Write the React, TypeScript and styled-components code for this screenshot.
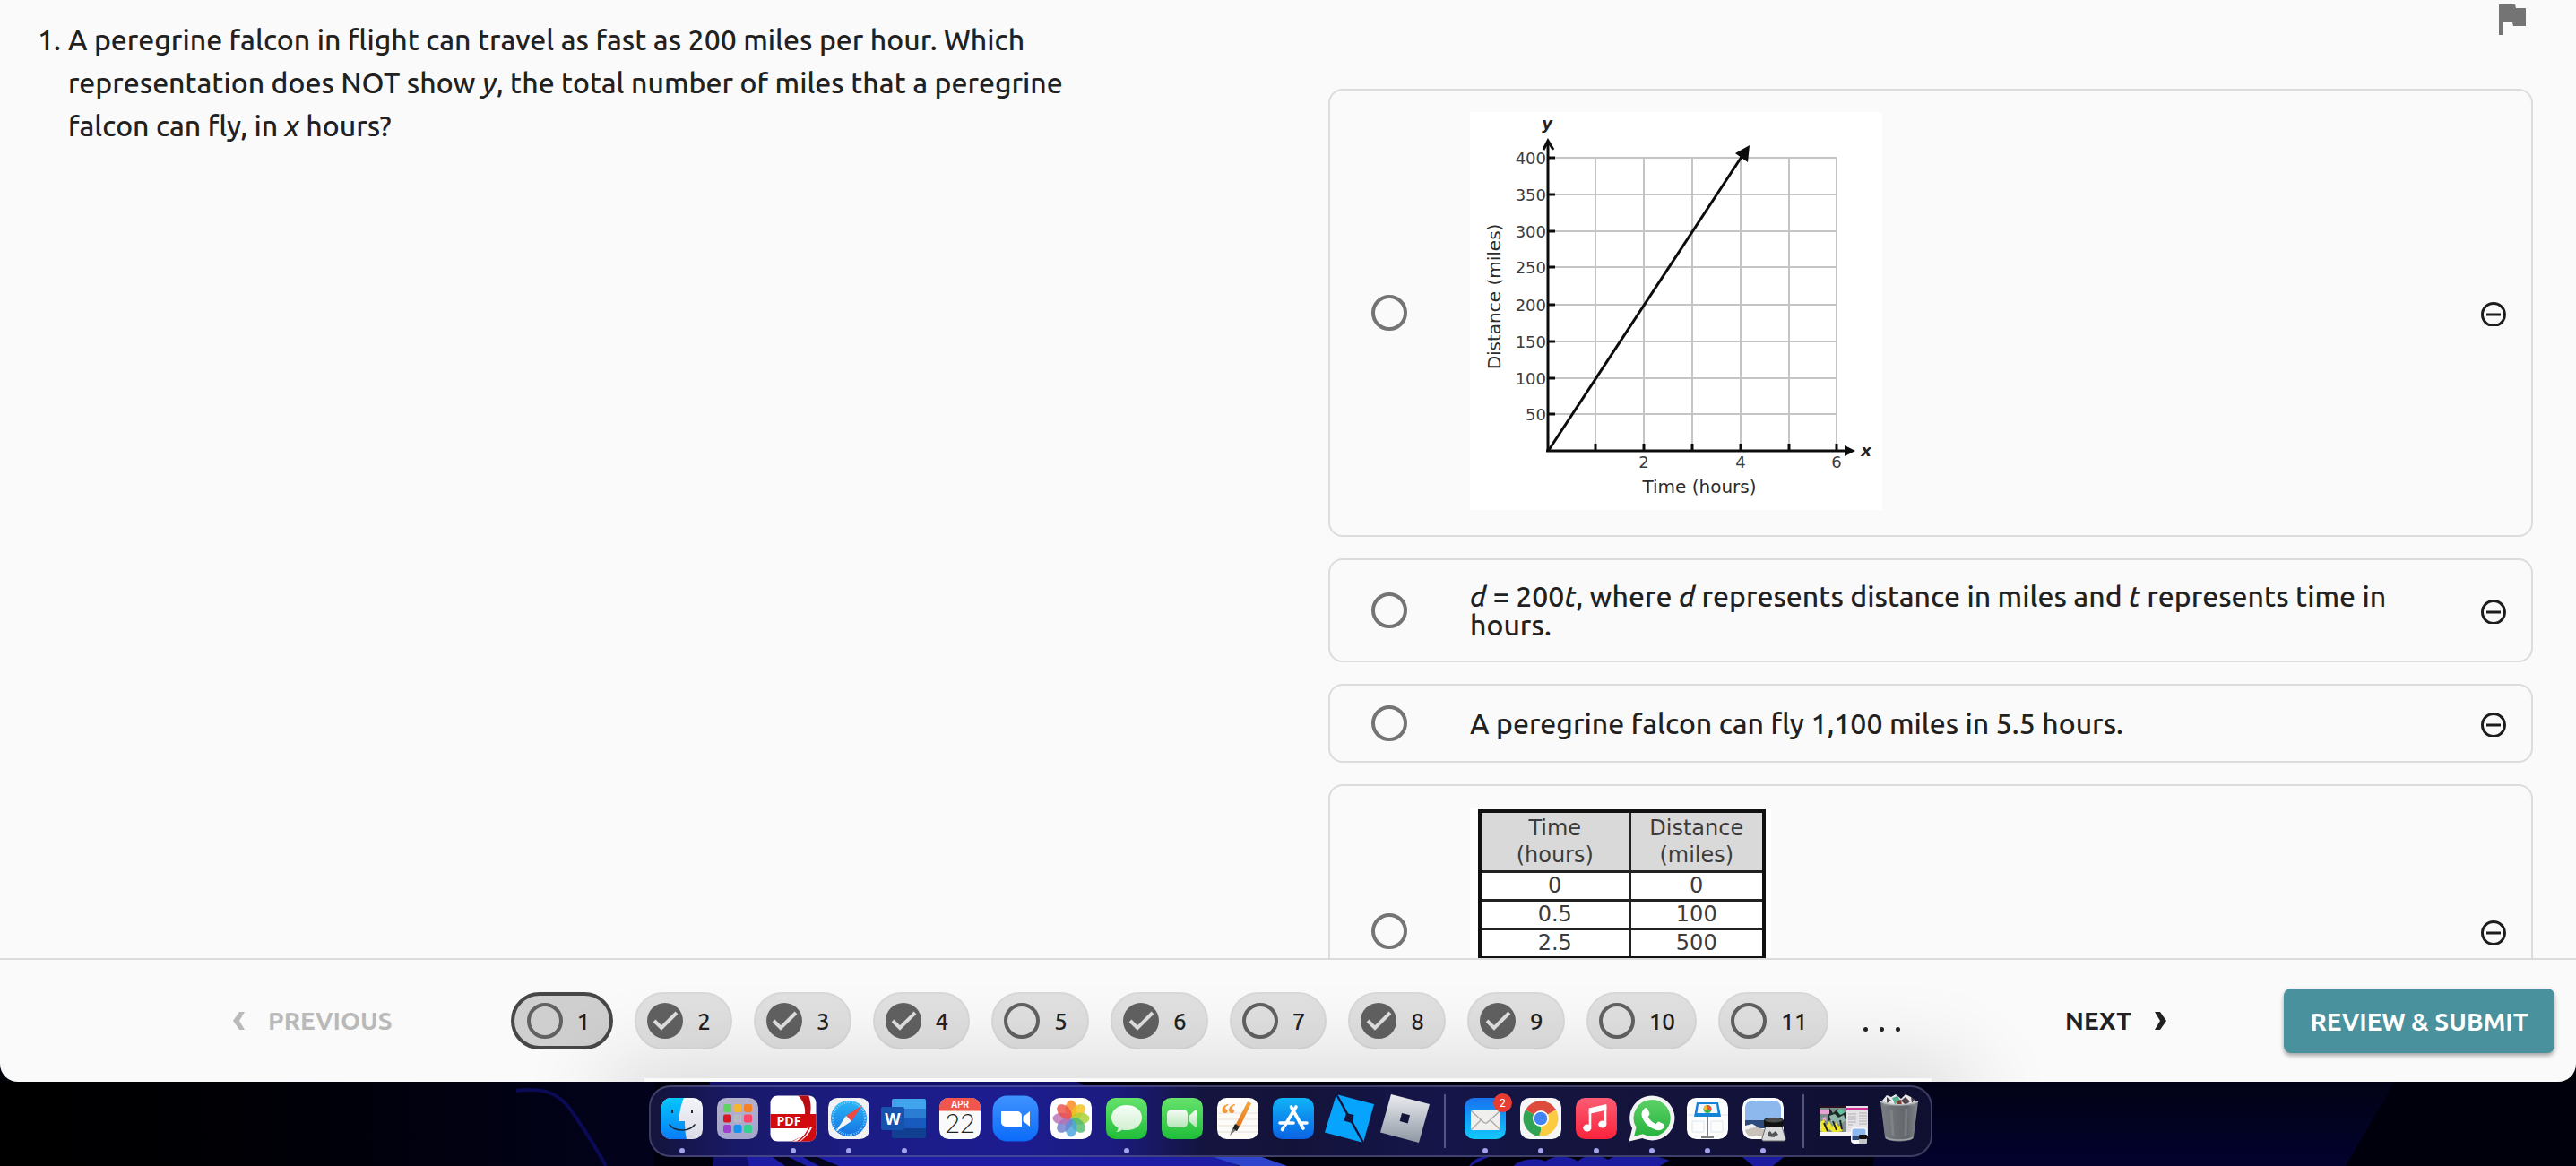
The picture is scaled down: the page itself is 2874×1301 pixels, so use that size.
import React, { useState } from "react";
import styled, { createGlobalStyle, css } from "styled-components";

const GlobalStyle = createGlobalStyle`
  *, *::before, *::after { box-sizing: border-box; }
  html, body, #root { height: 100%; }
  body {
    margin: 0;
    background: #000;
    color: #212121;
    font-family: Ubuntu, "Noto Sans", sans-serif;
    overflow: hidden;
  }
  button { font-family: inherit; }
`;

const Screen = styled.div`
  height: 100vh;
  display: flex;
  flex-direction: column;
  background: #000008;
`;

const Window = styled.div`
  flex: 1;
  min-height: 0;
  display: flex;
  flex-direction: column;
  background: #fafafa;
  border-radius: 0 0 20px 20px;
  position: relative;
`;

const Content = styled.main`
  flex: 1;
  min-height: 0;
  overflow: hidden;
  display: grid;
  grid-template-columns: 1fr 1fr;
`;

const QuestionPane = styled.section`
  display: flex;
  align-items: flex-start;
  gap: 8px;
  padding: 20px 224px 0 42px;
  font-size: 32px;
  font-weight: 500;
  line-height: 48px;
`;

const QuestionText = styled.p`
  margin: 0;
`;

const AnswerPane = styled.section`
  display: flex;
  flex-direction: column;
  padding: 0 48px 24px 45px;
`;

const FlagRow = styled.div`
  height: 99px;
  flex: none;
  display: flex;
  justify-content: flex-end;
  align-items: flex-start;
  padding: 5px 8px 0 0;
`;

const PlainButton = styled.button`
  border: 0;
  padding: 0;
  background: none;
  color: inherit;
  cursor: pointer;
  display: flex;
  align-items: center;
`;

const OptionList = styled.div`
  display: flex;
  flex-direction: column;
  gap: 24px;
`;

const OptionCard = styled.div`
  flex: none;
  display: flex;
  align-items: center;
  padding: 22px 27px 22px 46px;
  border: 2px solid #dcdcdc;
  border-radius: 16px;
`;

const Radio = styled.input`
  appearance: none;
  flex: none;
  width: 40px;
  height: 40px;
  margin: 0;
  border: 4px solid #747474;
  border-radius: 50%;
  cursor: pointer;
  &:checked { background: radial-gradient(#747474 50%, transparent 54%); }
`;

const OptionLabel = styled.label`
  flex: 1;
  padding: 2px 0 2px 70px;
  margin-right: 40px;
  font-size: 32px;
  font-weight: 500;
  line-height: 32px;
`;

const TableFrame = styled.div`
  width: 336px;
  min-height: 276px;
  padding: 2px 6px 0 9px;
  background: #fff;
`;

const DataTable = styled.table`
  width: 100%;
  border-collapse: collapse;
  border: 4px solid #111;
  color: #3c3c3c;
  font-family: Verdana, "DejaVu Sans", sans-serif;
  font-size: 24px;
  font-weight: 400;
  text-align: center;

  th, td { padding: 0; border: 3px solid #222; }
  th {
    background: #d9d9d9;
    font-weight: 400;
    line-height: 30px;
    padding: 2px 0;
  }
  td { line-height: 29px; }
  th:first-child { width: 167px; }
`;

const Footer = styled.footer`
  flex: none;
  display: flex;
  align-items: center;
  height: 138px;
  padding: 0 24px 0 259px;
  border-top: 2px solid #dcdcdc;
`;

const StepButton = styled(PlainButton)<{ $muted?: boolean }>`
  gap: 26px;
  font-size: 28px;
  font-weight: 600;
  line-height: 36px;
  color: ${(p) => (p.$muted ? "#b9b9b9" : "#212121")};
  ${(p) => !p.$muted && css`margin: 0 130px 0 auto;`}
`;

const Pager = styled.nav`
  display: flex;
  align-items: center;
  gap: 24px;
  margin-left: 132px;
`;

const Pill = styled.button<{ $current?: boolean }>`
  display: flex;
  align-items: center;
  gap: 16px;
  height: 64px;
  padding: 0 22px 0 12px;
  border: 2px solid #d9d9d9;
  border-radius: 32px;
  background: #e0e0e0;
  color: #212121;
  font-size: 26px;
  font-weight: 500;
  cursor: pointer;
  ${(p) =>
    p.$current &&
    css`
      padding-left: 14px;
      border: 4px solid #474747;
      background: #cfcfcf;
    `}
`;

const More = styled.span`
  display: flex;
  gap: 13px;
  padding: 18px 0 0 15px;
`;

const MoreDot = styled.i`
  width: 5px;
  height: 5px;
  border-radius: 50%;
  background: #212121;
`;

const SubmitButton = styled.button`
  height: 72px;
  width: 302px;
  border: 0;
  border-radius: 8px;
  background: #4a919e;
  color: #fff;
  font-size: 28px;
  font-weight: 600;
  box-shadow: 0 3px 5px rgba(0, 0, 0, 0.35);
  white-space: nowrap;
  cursor: pointer;
`;

const Desktop = styled.div`
  flex: none;
  position: relative;
  height: 94px;
  padding: 4px 0 10px 6px;
  display: flex;
  justify-content: center;
`;

const Wallpaper = styled.svg`
  position: absolute;
  inset: 0;
  width: 100%;
  height: 100%;
`;

const WindowShade = styled.div`
  position: absolute;
  inset: -140px 0 94px;
  overflow: hidden;
  pointer-events: none;
  display: flex;
  justify-content: center;
  align-items: flex-end;

  &::after {
    content: "";
    width: 1436px;
    height: 4px;
    box-shadow: 0 30px 100px 40px rgba(0, 0, 0, 0.16);
  }
`;

const Dock = styled.div`
  position: relative;
  display: flex;
  align-items: flex-start;
  padding: 7px 4px 0;
  border: 2px solid rgba(125, 125, 170, 0.42);
  border-radius: 24px;
  background: linear-gradient(90deg, #14143c 0%, #19196a 7%, #1c1c86 17%, #1c1c90 28%, #1b1b80 36%, #141440 43%, #13133a 50%, #15154a 62%, #14143e 72%, #12123a 85%, #0f0f30 100%);
`;

const DockItem = styled.button`
  position: relative;
  display: flex;
  flex-direction: column;
  align-items: center;
  gap: 5px;
  width: 62px;
  padding: 0;
  border: 0;
  background: none;
  cursor: pointer;
`;

const RunningDot = styled.i`
  width: 6px;
  height: 6px;
  border-radius: 50%;
  background: #a3a3ec;
`;

const DockRule = styled.i`
  width: 2px;
  height: 60px;
  margin: 1px 13px 0;
  background: rgba(150, 150, 190, 0.5);
`;

const Badge = styled.span`
  position: absolute;
  top: 0;
  right: 1px;
  width: 21px;
  height: 21px;
  border-radius: 50%;
  background: #ea3b32;
  color: #fff;
  font: 12px/21px Inter, sans-serif;
  text-align: center;
`;

/* ---------- chart ---------- */

const GRID_X = [140, 194, 248, 302, 356, 409];
const GRID_Y: [number, number][] = [
  [400, 51], [350, 92], [300, 133], [250, 173], [200, 215], [150, 256], [100, 297], [50, 337],
];

function DistanceChart() {
  return (
    <svg width="460" height="448" viewBox="0 0 460 448" display="block" fontFamily='Verdana, "DejaVu Sans", sans-serif' fontWeight="400" role="img" aria-label="Distance in miles over time in hours">
      <rect width="460" height="444" fill="#fff" />
      <g stroke="#c4c4c4" strokeWidth="2">
        {GRID_X.map((x) => <line key={x} x1={x} x2={x} y1="51" y2="378" />)}
        {GRID_Y.map(([v, y]) => <line key={v} x1="87" x2="409" y1={y} y2={y} />)}
      </g>
      <g stroke="#0c0c0c" strokeWidth="3" fill="none">
        <path d="M87 379V34M85 378H424" />
        <path d="M82 42l5-10 6 10" />
        {GRID_X.map((x) => <line key={x} x1={x} x2={x} y1="370" y2="378" />)}
        {GRID_Y.map(([v, y]) => <line key={v} x1="87" x2="95" y1={y} y2={y} />)}
        <line x1="88" y1="377" x2="305" y2="47" />
      </g>
      <path d="M312 37l-16 9 14 10z" fill="#0c0c0c" />
      <path d="M430 378l-12-6v12z" fill="#0c0c0c" />
      <g fontSize="18" fill="#3c3c3c">
        {GRID_Y.map(([v, y]) => <text key={v} x="85" y={y + 7} textAnchor="end">{v}</text>)}
        {[2, 4, 6].map((v) => <text key={v} x={GRID_X[v - 1]} y="397" textAnchor="middle">{v}</text>)}
      </g>
      <g fontSize="20" fill="#2c2c2c">
        <text x="256" y="425" textAnchor="middle">Time (hours)</text>
        <text transform="translate(34 206) rotate(-90)" textAnchor="middle">Distance (miles)</text>
      </g>
      <g fontSize="18" fontWeight="700" fontStyle="italic" fill="#222">
        <text x="86" y="19" textAnchor="middle">y</text>
        <text x="442" y="384" textAnchor="middle">x</text>
      </g>
    </svg>
  );
}

const ROWS = [["0", "0"], ["0.5", "100"], ["2.5", "500"]];

function DistanceTable() {
  return (
    <TableFrame>
      <DataTable>
        <thead>
          <tr><th>Time<br />(hours)</th><th>Distance<br />(miles)</th></tr>
        </thead>
        <tbody>
          {ROWS.map(([t, d]) => <tr key={t}><td>{t}</td><td>{d}</td></tr>)}
        </tbody>
      </DataTable>
    </TableFrame>
  );
}

/* ---------- small icons ---------- */

const MinusIcon = () => (
  <svg width="30" height="30" viewBox="0 0 30 30" fill="none" stroke="#1d1d1d">
    <circle cx="15" cy="17" r="12.5" strokeWidth="3" />
    <path d="M7 17h16" strokeWidth="3" />
  </svg>
);

const FlagIcon = () => (
  <svg width="30" height="34" viewBox="0 0 30 34" fill="#747474">
    <path d="M0 0h18l1 4h11v20H16l-1-4H4v14H0z" />
  </svg>
);

const Chevron = ({ back }: { back?: boolean }) => (
  <svg width="14" height="20" viewBox="0 0 14 20" fill="currentColor">
    <path d={back ? "M8 0h6L8 10l6 10H8L1 10z" : "M6 0H0l6 10L0 20h6l7-10z"} />
  </svg>
);

const StatusIcon = ({ done }: { done: boolean }) => (
  <svg width="40" height="40" viewBox="0 0 40 40" fill="none">
    {done ? (
      <>
        <circle cx="20" cy="20" r="20" fill="#616161" />
        <path d="M8 20l8 8L33 11" stroke="#e0e0e0" strokeWidth="4" />
      </>
    ) : (
      <circle cx="20" cy="20" r="18" stroke="#616161" strokeWidth="4" />
    )}
  </svg>
);

/* ---------- dock icons, drawn on a 56 unit square ---------- */

const Tile = ({ fill }: { fill: string }) => <rect x="5" y="5" width="46" height="46" rx="10.5" fill={fill} />;

const Gradient = ({ id, from, to }: { id: string; from: string; to: string }) => (
  <linearGradient id={id} x1="0" y1="0" x2="0" y2="1">
    <stop offset="0" stopColor={from} />
    <stop offset="1" stopColor={to} />
  </linearGradient>
);

const Finder = () => (
  <>
    <Gradient id="fdA" from="#04c8fb" to="#087cf8" />
    <Gradient id="fdB" from="#f4f5f8" to="#dadbe6" />
    <Tile fill="url(#fdB)" />
    <path d="M15.500 5H30c-3 7-5 15-5.500 26h6.500c0 8 .5 14 2 20H15.500A10.500 10.500 0 0 1 5 40.500v-25A10.500 10.500 0 0 1 15.500 5z" fill="url(#fdA)" />
    <path d="M17 18v4M39 18v4" stroke="#1b2b3c" strokeWidth="2" />
    <path d="M14 35c6 8 22 8 28 0" stroke="#1b2b3c" strokeWidth="1.600" fill="none" strokeLinecap="round" />
  </>
);

const PAD = ["#5fd463", "#f5b52c", "#f58025", "#d9181f", "#b5b9c4", "#fa4668", "#a03fd0", "#1593f0", "#35cf94"];
const Launchpad = () => (
  <>
    <Gradient id="lp" from="#b4b2cc" to="#a5a4cb" />
    <Tile fill="url(#lp)" />
    {PAD.map((c, i) => <rect key={c} x={12 + (i % 3) * 11.500} y={12 + Math.floor(i / 3) * 11.500} width="9" height="9" rx="2" fill={c} />)}
  </>
);

const PdfReader = () => (
  <>
    <clipPath id="pdfC"><rect x="2.500" y="2.500" width="51" height="51" rx="8" /></clipPath>
    <g clipPath="url(#pdfC)">
      <rect width="56" height="56" fill="#fff" />
      <path d="M33 2h12c3 8 3 14 2 22h-6c1-9-2-16-8-22z" fill="#b90f14" />
      <path d="M2 23h52v32H22c12-4 20-10 24-16H2z" fill="#d10b10" />
      <path d="M26 54c8-3 15-9 18-16h5c-3 7-8 12-14 16z" fill="#fff" />
      <path d="M32 54c7-4 11-9 14-16" stroke="#d10b10" strokeWidth="1.500" fill="none" />
    </g>
    <text x="23" y="36" fontSize="14" fontWeight="700" textAnchor="middle" fill="#fff" fontFamily='"Open Sans", sans-serif'>PDF</text>
  </>
);

const Safari = () => (
  <>
    <Gradient id="sf" from="#29b6f5" to="#1672e3" />
    <Tile fill="#f1f1f4" />
    <circle cx="28" cy="28" r="20" fill="url(#sf)" />
    <circle cx="28" cy="28" r="18" fill="none" stroke="#9edbff" strokeWidth="2" strokeDasharray=".8 1.600" />
    <path d="M43 13L31 31l-6-6z" fill="#ee4a42" />
    <path d="M13 43l12-18 6 6z" fill="#f5f5f5" />
  </>
);

const Word = () => (
  <>
    <path d="M14 8a2 2 0 0 1 2-2h34a2 2 0 0 1 2 2v9H14z" fill="#41a5ee" />
    <path d="M14 17h38v11H14z" fill="#2b7cd3" />
    <path d="M14 28h38v11H14z" fill="#185abd" />
    <path d="M14 39h38v9a2 2 0 0 1-2 2H16a2 2 0 0 1-2-2z" fill="#103f91" />
    <rect x="2" y="15" width="26" height="26" rx="2" fill="#1553ae" />
    <text x="15" y="35" fontSize="18" fontWeight="700" textAnchor="middle" fill="#fff" fontFamily='"Open Sans", sans-serif'>W</text>
  </>
);

const Calendar = () => (
  <>
    <Tile fill="#fafafa" />
    <path d="M5 19.500v-4A10.500 10.500 0 0 1 15.500 5h25A10.500 10.500 0 0 1 51 15.500v4z" fill="#f1564e" />
    <text x="28" y="16" fontSize="10" fontWeight="600" textAnchor="middle" fill="#fff" fontFamily="Inter, sans-serif">APR</text>
    <text x="28" y="44" fontSize="29" fontWeight="300" textAnchor="middle" fill="#222" fontFamily='Lato, "Open Sans", sans-serif'>22</text>
  </>
);

const Zoom = () => (
  <>
    <Gradient id="zm" from="#3f93ff" to="#0b6bfa" />
    <rect x="2.500" y="2.500" width="51" height="51" rx="16" fill="url(#zm)" />
    <path d="M12 20h18a5 5 0 0 1 5 5v12H17a5 5 0 0 1-5-5zM36.500 26l7.500-6v17l-7.500-6z" fill="#fff" />
  </>
);

const PETALS = ["#f98a1f", "#f2c21c", "#a8cf38", "#4fb96a", "#4aa3dc", "#6d7fce", "#b871b4", "#ec5147"];
const Photos = () => (
  <>
    <Tile fill="#fff" />
    {PETALS.map((c, i) => <ellipse key={c} cx="28" cy="17.500" rx="6.500" ry="10" fill={c} opacity=".82" transform={`rotate(${i * 45} 28 28)`} />)}
  </>
);

const Messages = () => (
  <>
    <Gradient id="ms" from="#66e36c" to="#20bd3a" />
    <Gradient id="msB" from="#f8fdf8" to="#cdeecd" />
    <Tile fill="url(#ms)" />
    <path d="M28 13c-10 0-17 6-17 14 0 5 3 9 7.500 11.500 0 2-1 3.500-2.500 4.500 3 0 5.500-1 7-2.500 1.600.4 3.300.5 5 .5 10 0 17-6 17-14s-7-14-17-14z" fill="url(#msB)" />
  </>
);

const FaceTime = () => (
  <>
    <Gradient id="ft" from="#66e36c" to="#20bd3a" />
    <Gradient id="ftB" from="#f5fcf5" to="#b7e6b9" />
    <Tile fill="url(#ft)" />
    <rect x="11" y="18" width="23" height="20" rx="5" fill="url(#ftB)" />
    <path d="M35.500 25l6.500-6c1.500-1 2.500-.5 2.500 1v16c0 1.500-1 2-2.500 1l-6.500-6z" fill="url(#ftB)" />
  </>
);

const Pages = () => (
  <>
    <Gradient id="pg" from="#f6a640" to="#e0761c" />
    <Tile fill="#fdfcf8" />
    <path d="M6 22h44M6 29h44M6 36h44M6 43h44" stroke="#e6e1d6" />
    <text x="9" y="34" fontSize="34" fontWeight="700" fill="#f29a37" fontFamily='"Liberation Serif", serif'>“</text>
    <path d="M39 9l4 2-13 27-5-2z" fill="url(#pg)" />
    <path d="M25 34l5 3-3 5-5-2z" fill="#222" />
    <path d="M22 39l4 2-7 6z" fill="#777" />
  </>
);

const AppStore = () => (
  <>
    <Gradient id="as" from="#10b4f7" to="#0a62e4" />
    <Tile fill="url(#as)" />
    <path d="M31 15L19 35M25.500 15L39 39M13 33h15M35 33h8M17 38l-1.500 2.500" stroke="#fff" strokeWidth="3.600" strokeLinecap="round" />
  </>
);

const RobloxStudio = () => (
  <>
    <path d="M14 1L56 12 44 55 1 43.500z" fill="#07a4fd" />
    <path d="M14 1l30 54" stroke="#14143a" strokeWidth="2.400" />
    <path d="M25 22l8.500 2-2.500 9-8.500-2.500z" fill="#14143a" />
  </>
);

const Roblox = () => (
  <>
    <Gradient id="rb" from="#ececf0" to="#8e98a4" />
    <path d="M13 1L56 12 44 55 1 43.500z" fill="url(#rb)" />
    <path d="M25 22l9 2.300-2.300 9.200-9-2.400z" fill="#14143a" />
  </>
);

const Mail = () => (
  <>
    <Gradient id="ml" from="#1672f0" to="#13c8fb" />
    <Tile fill="url(#ml)" />
    <rect x="12" y="19" width="33" height="22" rx="2" fill="#f0efed" />
    <path d="M13 20l13 12c1.500 1.400 3.500 1.400 5 0l13-12M13 40l10-10M44 40L34 30" stroke="#a8a8a8" strokeWidth="1.300" fill="none" />
  </>
);

const Chrome = () => (
  <>
    <Tile fill="#f6f6f6" />
    <path d="M28 28L11.100 18.300A19.500 19.500 0 0 1 44.900 18.300z" fill="#dd4b3d" />
    <path d="M28 28L44.900 18.300A19.500 19.500 0 0 1 28 47.500z" fill="#fbcb42" />
    <path d="M28 28v19.500A19.500 19.500 0 0 1 11.100 18.300z" fill="#32a352" />
    <path d="M28 19h17.300a19.500 19.500 0 0 0-1-2H26z" fill="#dd4b3d" />
    <path d="M36 32.500L28 47.500l-2-.2 4-11z" fill="#fbcb42" />
    <path d="M20 32.500L11 18.500l-1 2 6 14z" fill="#32a352" />
    <circle cx="28" cy="28" r="9" fill="#fff" />
    <circle cx="28" cy="28" r="7.300" fill="#4285f4" />
  </>
);

const Music = () => (
  <>
    <Gradient id="mu" from="#fb5c74" to="#fa233b" />
    <Tile fill="url(#mu)" />
    <path d="M21 18v20M38 14v20" stroke="#fff" strokeWidth="2.600" />
    <path d="M19.700 16.500L39.300 12v6.500L19.700 23z" fill="#fff" />
    <ellipse cx="17.800" cy="38.500" rx="4.600" ry="4" fill="#fff" />
    <ellipse cx="34.800" cy="34.500" rx="4.600" ry="4" fill="#fff" />
  </>
);

const WhatsApp = () => (
  <>
    <Gradient id="wa" from="#5bd066" to="#27b43e" />
    <path d="M28.500 2.500A25 25 0 0 0 6 39L2.500 53.500 17.500 50A25 25 0 1 0 28.500 2.500z" fill="#f3f3f3" />
    <path d="M28.500 7A20.500 20.500 0 0 0 10.500 38L8 48l10-2.700A20.500 20.500 0 1 0 28.500 7z" fill="url(#wa)" />
    <path d="M19.500 17c1.500-1.500 3-1.200 3.700.2l2.200 5c.4 1-.2 1.800-1.800 3.800 2.200 4 5 6.600 9 8.200 1.600-2 2.400-3 3.500-2.500l5 2.500c1.300.7 1 2.800 0 4.300-1.700 2.300-5 3.300-8.500 2.200C24.500 38 19.500 33 17 26.500c-1.200-3.800-.2-7 2.500-9.500z" fill="#fff" />
  </>
);

const Keynote = () => (
  <>
    <Tile fill="#fdfdfd" />
    <path d="M11 31h13v12H11zM32 31h13v12H32zM5 24h46" stroke="#dbe7f0" fill="none" />
    <path d="M28 26v22M21 49h14" stroke="#7d8087" strokeWidth="2" />
    <path d="M16 10h24l3 16H13z" fill="#1583d5" />
    <path d="M18 12h20l1.500 10h-23z" fill="#f0f8ff" />
    <circle cx="28" cy="17.500" r="4.500" fill="#3fb54d" />
    <path d="M28 17.500V13a4.500 4.500 0 0 0-4 6.500z" fill="#f6b82c" />
    <path d="M28 17.500V13a4.500 4.500 0 0 1 4 6.500z" fill="#ee5043" />
  </>
);

const Preview = () => (
  <>
    <Tile fill="#fafafa" />
    <clipPath id="pvC"><rect x="8" y="8" width="40" height="40" rx="8" /></clipPath>
    <g clipPath="url(#pvC)">
      <rect x="8" y="8" width="40" height="23" fill="#8db8ee" />
      <rect x="8" y="30" width="40" height="9" fill="#2e4a7d" />
      <path d="M8 38l8-2 12 4 20-2v10H8z" fill="#c9c2ba" />
      <path d="M8 36l8-2 5 3-13 4z" fill="#f1f1f1" />
    </g>
    <path d="M31 37h18l4 13c.5 2-.5 3-2 3H29c-2 0-2.500-1-2-3z" fill="#d9dadc" stroke="#666" />
    <path d="M33 44l3-2 2 3 4-3 3 4-5 3-6-1z" fill="#555" />
    <rect x="29" y="28" width="22" height="10" rx="3" fill="#111" />
    <ellipse cx="40" cy="30" rx="10" ry="2.500" fill="#4a4a4a" />
  </>
);

const MinimizedWindow = () => (
  <>
    <rect x="1" y="14" width="54" height="33" fill="#e5e3e6" />
    <path d="M1 14h30v29H1z" fill="#7d8f8a" />
    <path d="M1 14h30v2H1z" fill="#2a1020" />
    <path d="M31 16h24v3H31z" fill="#d3319b" />
    <path d="M12 16l4 6 5-5 4 7 6-4v9l-8 3-6-3-7 2z" fill="#1d2a26" />
    <path d="M1 18h11v5H1zM3 28l5-2 1 5z" fill="#e9a3d2" />
    <path d="M20 19l5-2 4 4-5 3z" fill="#5fc3a0" />
    <path d="M2 32l4-3 2 8 4-6 3 6 5-5 2 5 4-2v7l-9 2-5-4-4 4-6-2z" fill="#efe631" />
    <path d="M12 25l6-2 4 4 6-3 2 6-6 5-5-3-4 3z" fill="#8fb6a9" />
    <path d="M6 33l4 9M16 31l4 10M24 30l2 10" stroke="#222" strokeWidth="2" />
    <path d="M33 23h9M33 26h9M33 29h9M33 32h9M33 35h5M45 22h9M45 25h9M45 28h9M45 31h9M45 34h9" stroke="#b3aeb6" />
    <path d="M1 43h36v4H1z" fill="#f6f4f4" />
    <rect x="36" y="38" width="18" height="18" rx="4" fill="#f7f7f7" />
    <rect x="37.500" y="39.500" width="15" height="9" rx="2" fill="#8db8ee" />
    <rect x="37.500" y="47" width="8" height="5" fill="#2e4a7d" />
    <rect x="45" y="46" width="9" height="5" rx="1" fill="#111" />
    <rect x="45" y="51" width="9" height="5" rx="1" fill="#c4c6c8" />
  </>
);

const Trash = () => (
  <>
    <linearGradient id="tr" x1="0" y1="0" x2="1" y2="0">
      <stop offset="0" stopColor="#83878a" />
      <stop offset=".3" stopColor="#777b7e" />
      <stop offset=".7" stopColor="#696d70" />
      <stop offset="1" stopColor="#8d9194" />
    </linearGradient>
    <path d="M9 8l5-6 5 2 5-3 6 5 5-5 6 3 6 5-3 5H11z" fill="#e8e8ea" />
    <path d="M14 4l5 4-5 3zM30 8l5-4 5 5-5 4zM41 4l4 3-3 4z" fill="#50424b" />
    <path d="M20 5l6-2 4 6-7 3z" fill="#55b191" />
    <path d="M25 9l5-2 1 6h-6z" fill="#7c3f35" />
    <path d="M7 9c10 5 32 5 42 0l-5 40c-1 6-31 6-32 0z" fill="url(#tr)" opacity=".93" />
    <path d="M7 9c10 5 32 5 42 0" fill="none" stroke="#b8bbbd" strokeWidth="1.400" />
    <path d="M13 49c4 4 26 4 30 0" fill="none" stroke="#a2a5a8" strokeWidth="1.500" />
    <path d="M19 18l2 29M36 17l-1 30" stroke="#8e9295" opacity=".5" strokeWidth="3" />
  </>
);

type App = { name: string; Icon: () => React.ReactElement; running?: boolean; badge?: number };

const DOCK: App[][] = [
  [
    { name: "Finder", Icon: Finder, running: true },
    { name: "Launchpad", Icon: Launchpad },
    { name: "PDF Reader", Icon: PdfReader, running: true },
    { name: "Safari", Icon: Safari, running: true },
    { name: "Word", Icon: Word, running: true },
    { name: "Calendar", Icon: Calendar },
    { name: "Zoom", Icon: Zoom },
    { name: "Photos", Icon: Photos },
    { name: "Messages", Icon: Messages, running: true },
    { name: "FaceTime", Icon: FaceTime },
    { name: "Pages", Icon: Pages },
    { name: "App Store", Icon: AppStore },
    { name: "Roblox Studio", Icon: RobloxStudio },
    { name: "Roblox", Icon: Roblox },
  ],
  [
    { name: "Mail", Icon: Mail, running: true, badge: 2 },
    { name: "Chrome", Icon: Chrome, running: true },
    { name: "Music", Icon: Music, running: true },
    { name: "WhatsApp", Icon: WhatsApp, running: true },
    { name: "Keynote", Icon: Keynote, running: true },
    { name: "Preview", Icon: Preview, running: true },
  ],
  [
    { name: "Minimized window", Icon: MinimizedWindow },
    { name: "Trash", Icon: Trash },
  ],
];

const DesktopArt = () => (
  <Wallpaper viewBox="0 0 2874 94" preserveAspectRatio="none" aria-hidden="true">
    <linearGradient id="wpL" x1="0" x2="1">
      <stop offset="0" stopColor="#000" />
      <stop offset=".4" stopColor="#000006" />
      <stop offset="1" stopColor="#02021c" />
    </linearGradient>
    <linearGradient id="wpR" x1="0" x2="0" y1="0" y2="1">
      <stop offset="0" stopColor="#020216" />
      <stop offset="1" stopColor="#02022e" />
    </linearGradient>
    <rect width="2874" height="94" fill="#00000c" />
    <path d="M0 0h730v94H0z" fill="url(#wpL)" />
    <path d="M2100 0h572l-55 94H2090z" fill="url(#wpR)" />
    <path d="M2672 0h202v94H2617z" fill="#00000c" />
    <path d="M576 10c34-4 50 4 64 26 14 20 24 36 36 58" fill="none" stroke="#0a0a55" strokeWidth="4" />
    <path d="M792 0h410l160 94H796z" fill="#10106c" />
    <path d="M832 80h520l30 14H836z" fill="#1c1ca4" />
    <path d="M862 84h18l20 10h-24zM896 84h16l24 10h-22z" fill="#04041e" />
    <path d="M1354 84h54l28 10h-52z" fill="#2e44cc" />
    <path d="M1640 94c6-8 12-10 20-10M1690 94c8-8 28-8 34-4 8-8 30-6 36 0 10-10 28-6 34-2 12-8 44-8 66 0l-10 6z" fill="#1b1ba0" stroke="#1b1ba0" strokeWidth="2" />
    <path d="M1944 84h46l-12 10h-22z" fill="#1b1ba0" />
  </Wallpaper>
);

const PAGES = [false, true, true, true, false, true, false, true, true, false, false];

const OPTIONS: { id: string; body: React.ReactNode }[] = [
  { id: "a", body: <DistanceChart /> },
  {
    id: "b",
    body: <><i>d</i> = 200<i>t</i>, where <i>d</i> represents distance in miles and <i>t</i> represents time in hours.</>,
  },
  { id: "c", body: "A peregrine falcon can fly 1,100 miles in 5.5 hours." },
  { id: "d", body: <DistanceTable /> },
];

export default function App() {
  const [answer, setAnswer] = useState("");
  return (
    <Screen>
      <GlobalStyle />
      <Window>
        <Content>
          <QuestionPane>
            <span>1.</span>
            <QuestionText>
              A peregrine falcon in flight can travel as fast as 200 miles per hour. Which representation does NOT
              show <i>y</i>, the total number of miles that a peregrine falcon can fly, in <i>x</i> hours?
            </QuestionText>
          </QuestionPane>
          <AnswerPane>
            <FlagRow>
              <PlainButton aria-label="Flag question"><FlagIcon /></PlainButton>
            </FlagRow>
            <OptionList role="radiogroup" aria-label="Answers">
              {OPTIONS.map(({ id, body }) => (
                <OptionCard key={id}>
                  <Radio type="radio" name="answer" id={`option-${id}`} checked={answer === id} onChange={() => setAnswer(id)} />
                  <OptionLabel htmlFor={`option-${id}`}>{body}</OptionLabel>
                  <PlainButton aria-label="Eliminate answer"><MinusIcon /></PlainButton>
                </OptionCard>
              ))}
            </OptionList>
          </AnswerPane>
        </Content>
        <Footer>
          <StepButton $muted><Chevron back />PREVIOUS</StepButton>
          <Pager aria-label="Questions">
            {PAGES.map((done, i) => (
              <Pill key={i} $current={i === 0}><StatusIcon done={done} />{i + 1}</Pill>
            ))}
            <More><MoreDot /><MoreDot /><MoreDot /></More>
          </Pager>
          <StepButton>NEXT<Chevron /></StepButton>
          <SubmitButton>REVIEW &amp; SUBMIT</SubmitButton>
        </Footer>
      </Window>
      <Desktop>
        <DesktopArt />
        <WindowShade />
        <Dock>
          {DOCK.map((group, g) => (
            <React.Fragment key={g}>
              {g > 0 && <DockRule />}
              {group.map(({ name, Icon, running, badge }) => (
                <DockItem key={name} aria-label={name}>
                  <svg width="56" height="56" viewBox="0 0 56 56"><Icon /></svg>
                  {running && <RunningDot />}
                  {badge && <Badge>{badge}</Badge>}
                </DockItem>
              ))}
            </React.Fragment>
          ))}
        </Dock>
      </Desktop>
    </Screen>
  );
}
